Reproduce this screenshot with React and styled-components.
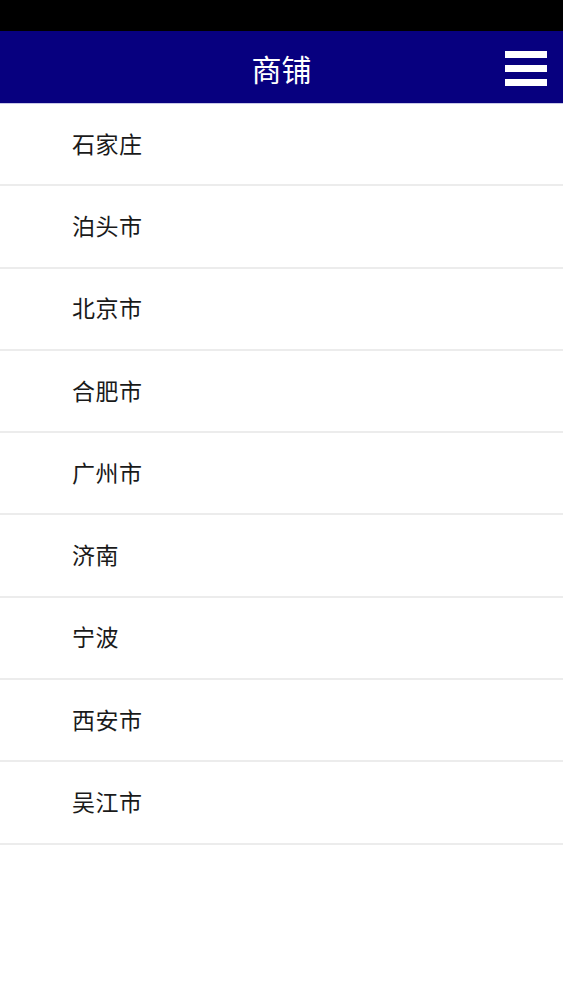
import React from 'react';
import styled, { createGlobalStyle } from 'styled-components';

const GlobalStyle = createGlobalStyle`
  html, body {
    margin: 0;
    padding: 0;
    background: #ffffff;
  }
  body {
    font-family: "Noto Sans CJK SC", "Liberation Sans", sans-serif;
  }
`;

const Screen = styled.div`
  width: 563px;
  min-height: 1000px;
  background: #ffffff;
  display: flex;
  flex-direction: column;
`;

const StatusBar = styled.div`
  height: 31px;
  background: #000000;
`;

const NavBar = styled.header`
  height: 72px;
  background: #07007f;
  display: grid;
  grid-template-columns: 1fr auto 1fr;
  align-items: center;
  padding: 0 16px;
  border-bottom: 1px solid #c8c8e8;
`;

const Title = styled.h1`
  grid-column: 2;
  margin: 0;
  color: #ffffff;
  font-size: 30px;
  font-weight: 400;
  line-height: 1;
  padding-top: 2px;
`;

const MenuButton = styled.button`
  grid-column: 3;
  justify-self: end;
  width: 42px;
  height: 35px;
  margin-top: 2px;
  padding: 0;
  border: none;
  background: transparent;
  display: flex;
  flex-direction: column;
  justify-content: space-between;
  cursor: pointer;
`;

const MenuBar = styled.span`
  display: block;
  height: 7px;
  background: #ffffff;
`;

const List = styled.ul`
  list-style: none;
  margin: 0;
  padding: 0;
`;

const Row = styled.li`
  height: 77.3px;
  box-sizing: content-box;
  display: flex;
  align-items: center;
  padding: 0 0 3px 72px;
  border-bottom: 2px solid #ececec;
  color: #1a1a1a;
  font-size: 23px;
  letter-spacing: 0.5px;
`;

const cities = ['石家庄', '泊头市', '北京市', '合肥市', '广州市', '济南', '宁波', '西安市', '吴江市'];

export default function App() {
  return (
    <>
      <GlobalStyle />
      <Screen>
        <StatusBar />
        <NavBar>
          <Title>商铺</Title>
          <MenuButton aria-label="菜单">
            <MenuBar />
            <MenuBar />
            <MenuBar />
          </MenuButton>
        </NavBar>
        <List>
          {cities.map((city) => (
            <Row key={city}>{city}</Row>
          ))}
        </List>
      </Screen>
    </>
  );
}
